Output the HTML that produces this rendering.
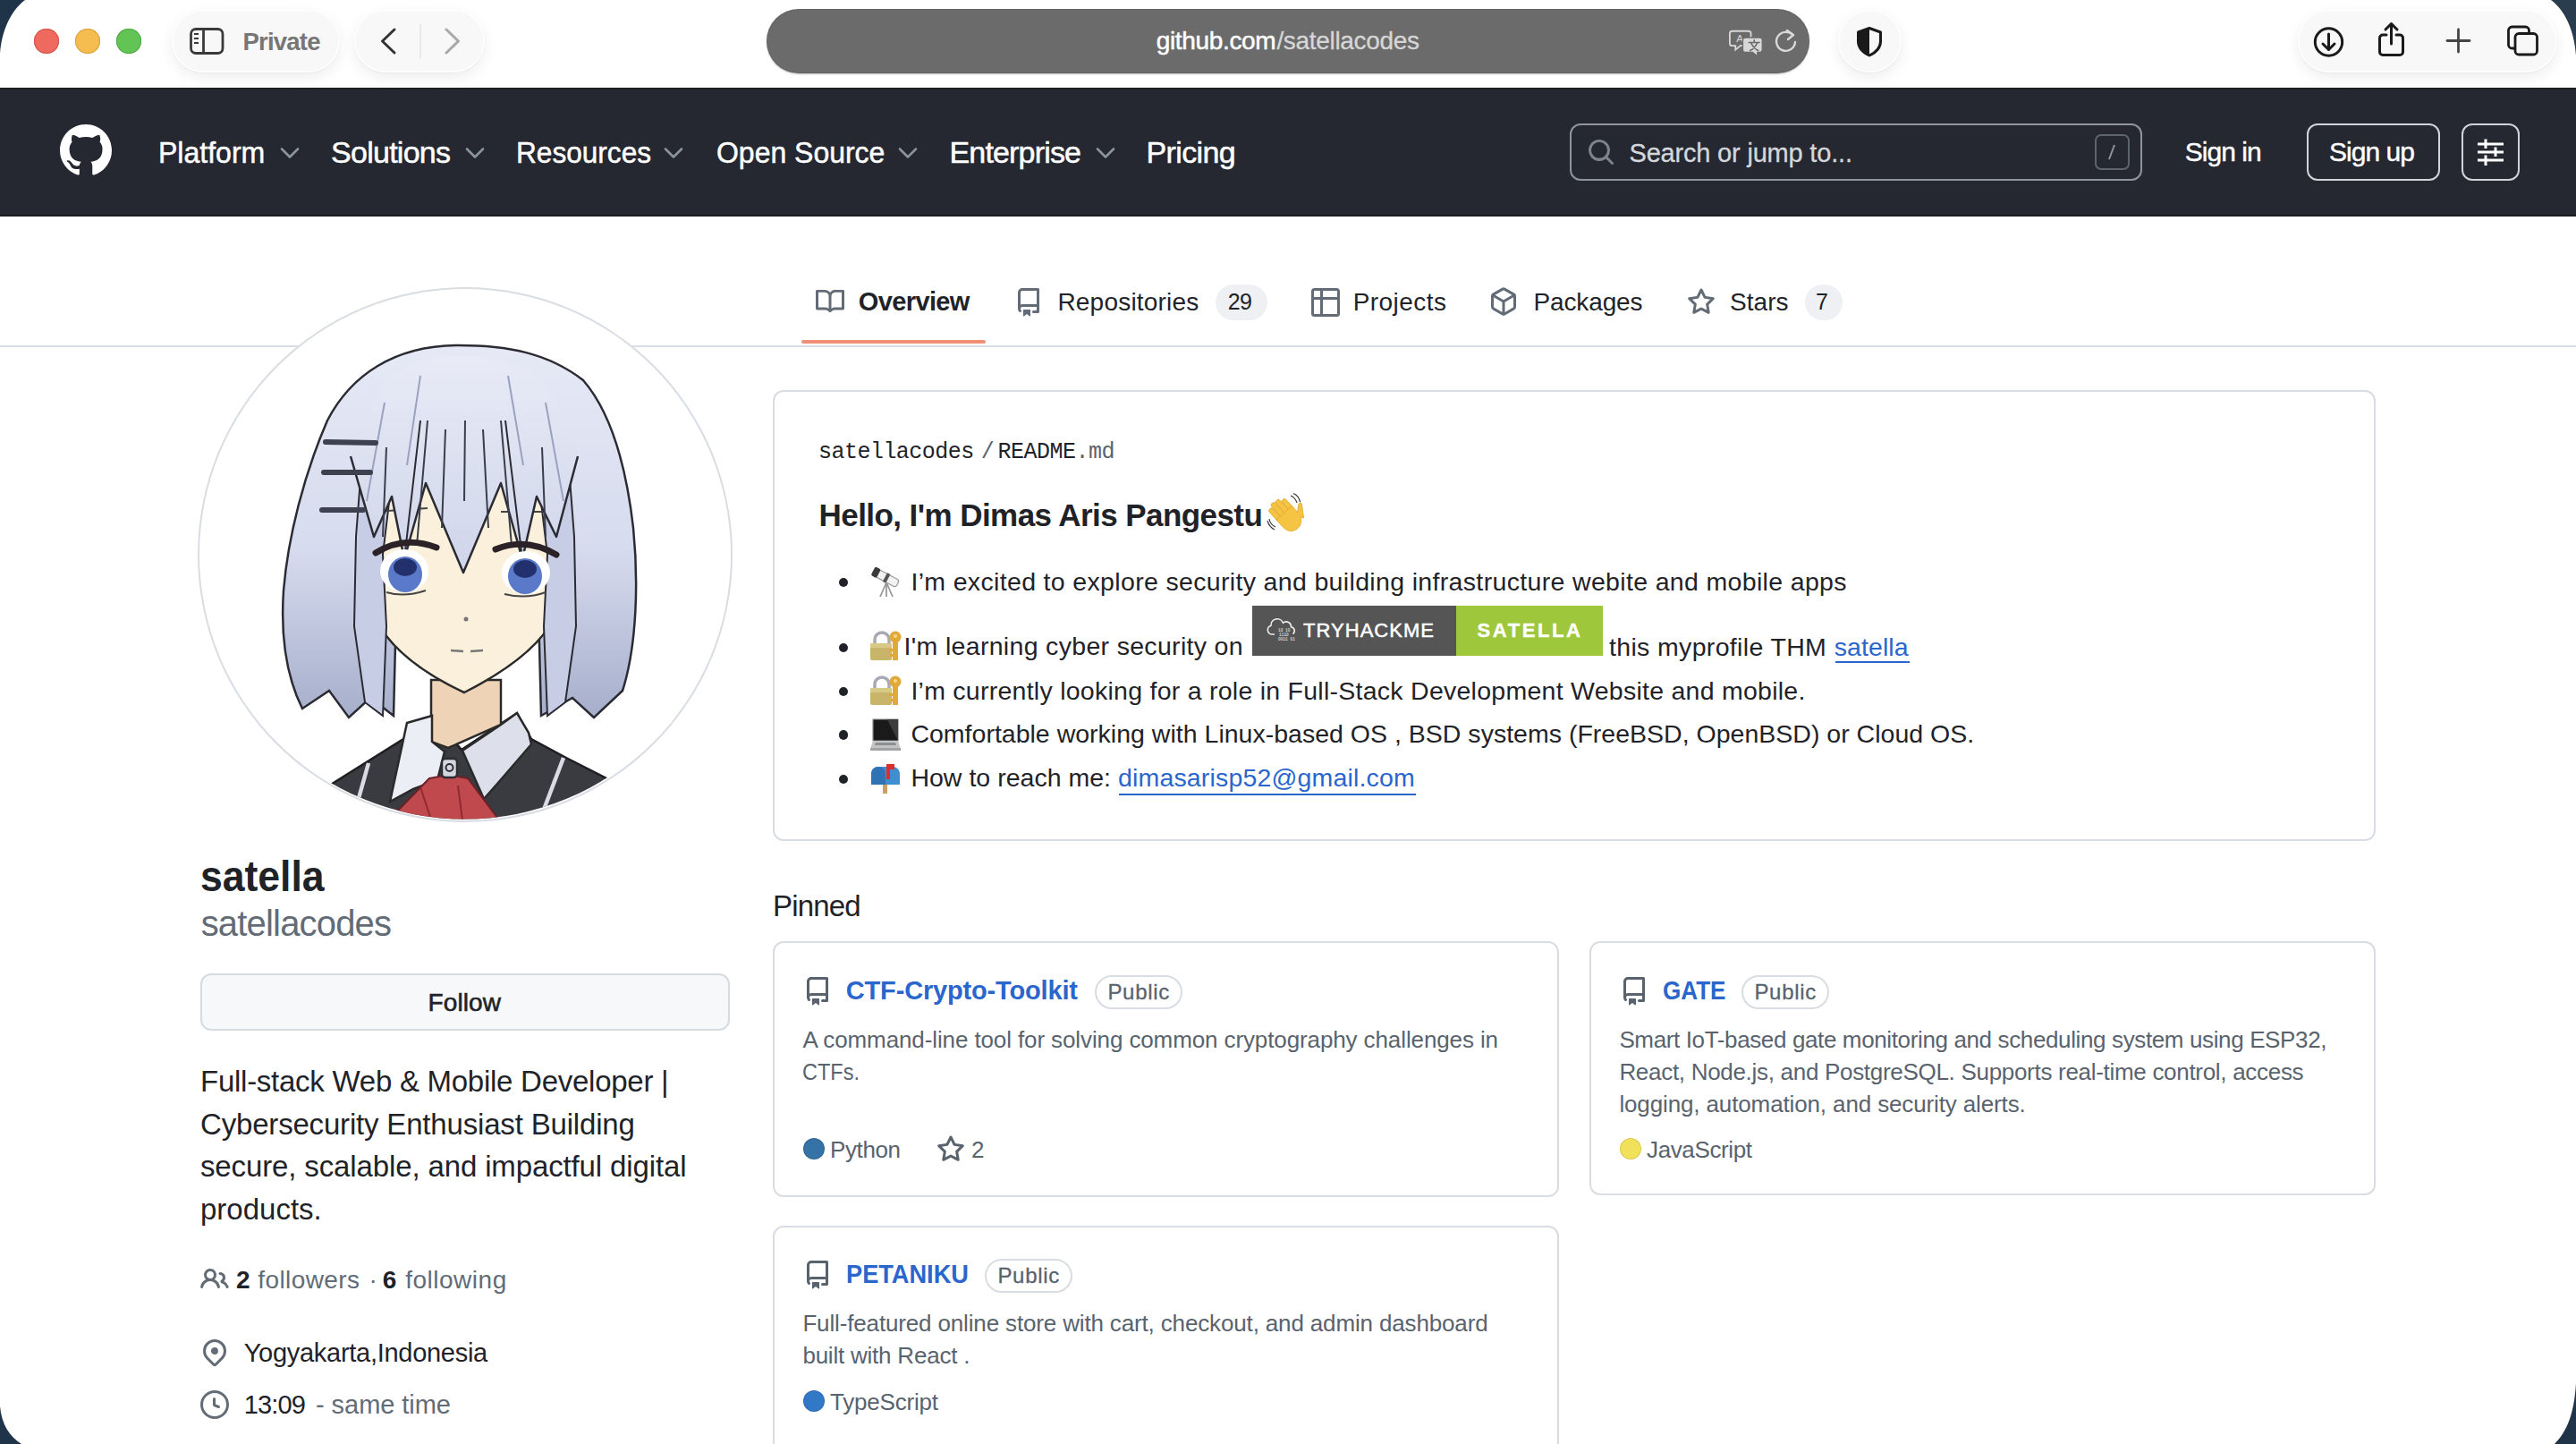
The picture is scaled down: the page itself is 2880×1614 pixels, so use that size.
<!DOCTYPE html>
<html><head><meta charset="utf-8"><title>satellacodes</title>
<style>
html,body{margin:0;padding:0;width:2880px;height:1614px;overflow:hidden;background:#22364d;}
.win{position:absolute;left:0;top:0;width:2880px;height:1614px;background:#ffffff;overflow:hidden;}
.t{position:absolute;white-space:nowrap;line-height:1;}
svg{overflow:visible}
</style></head><body>
<div class="win">
<div style="position:absolute;left:0;top:0;width:2880px;height:98px;background:#ffffff"></div>
<div style="position:absolute;left:38px;top:32px;width:28px;height:28px;border-radius:50%;background:#ee6a5f;box-shadow:inset 0 0 0 1px #d0534a"></div>
<div style="position:absolute;left:84px;top:32px;width:28px;height:28px;border-radius:50%;background:#f5bd4f;box-shadow:inset 0 0 0 1px #d9a23c"></div>
<div style="position:absolute;left:130px;top:32px;width:28px;height:28px;border-radius:50%;background:#61c455;box-shadow:inset 0 0 0 1px #4ea843"></div>
<div style="position:absolute;left:192px;top:11px;width:188px;height:70px;border-radius:35.0px;background:#f8f8f8;box-shadow:0 6px 16px rgba(0,0,0,0.07),0 1px 2px rgba(0,0,0,0.04),inset 0 0 0 1.5px rgba(255,255,255,0.9)"></div>
<div style="position:absolute;left:396px;top:11px;width:146px;height:70px;border-radius:35.0px;background:#f8f8f8;box-shadow:0 6px 16px rgba(0,0,0,0.07),0 1px 2px rgba(0,0,0,0.04),inset 0 0 0 1.5px rgba(255,255,255,0.9)"></div>
<div style="position:absolute;left:2055px;top:11px;width:71px;height:70px;border-radius:35.0px;background:#f8f8f8;box-shadow:0 6px 16px rgba(0,0,0,0.07),0 1px 2px rgba(0,0,0,0.04),inset 0 0 0 1.5px rgba(255,255,255,0.9)"></div>
<div style="position:absolute;left:2569px;top:11px;width:290px;height:70px;border-radius:35.0px;background:#f8f8f8;box-shadow:0 6px 16px rgba(0,0,0,0.07),0 1px 2px rgba(0,0,0,0.04),inset 0 0 0 1.5px rgba(255,255,255,0.9)"></div>
<svg style="position:absolute;left:208px;top:27px" width="46" height="38" viewBox="0 0 46 38">
<rect x="5.5" y="5.5" width="35.5" height="27" rx="5.5" fill="none" stroke="#3a3a3a" stroke-width="2.8"/>
<line x1="19.5" y1="5.5" x2="19.5" y2="32.5" stroke="#3a3a3a" stroke-width="2.8"/>
<line x1="9" y1="11" x2="14" y2="11" stroke="#3a3a3a" stroke-width="2"/>
<line x1="9" y1="16" x2="14" y2="16" stroke="#3a3a3a" stroke-width="2"/>
<line x1="9" y1="21" x2="14" y2="21" stroke="#3a3a3a" stroke-width="2"/>
</svg>
<div class="t" style="left:271.5px;top:32.7px;font-size:27.5px;font-family:'Liberation Sans', sans-serif;font-weight:700;color:#767676;letter-spacing:-0.79px;">Private</div>
<svg style="position:absolute;left:420px;top:28px" width="30" height="36" viewBox="0 0 30 36"><polyline points="21,5 7.5,18 21,31" fill="none" stroke="#333" stroke-width="3" stroke-linecap="round" stroke-linejoin="round"/></svg>
<div style="position:absolute;left:469px;top:27px;width:2px;height:38px;background:#e8e8e8"></div>
<svg style="position:absolute;left:490px;top:28px" width="30" height="36" viewBox="0 0 30 36"><polyline points="9,5 22.5,18 9,31" fill="none" stroke="#a9a9a9" stroke-width="3" stroke-linecap="round" stroke-linejoin="round"/></svg>
<div style="position:absolute;left:857px;top:10px;width:1166px;height:72px;border-radius:36px;background:#6b6b6b;box-shadow:0 1px 2px rgba(0,0,0,0.25), inset 0 0 0 1px rgba(0,0,0,0.08)"></div>
<div class="t" style="left:1292.7px;top:31.7px;font-size:28px;font-family:'Liberation Sans', sans-serif;font-weight:400;color:#ffffff;letter-spacing:-0.33px;-webkit-text-stroke:0.5px #fff;">github.com</div>
<div class="t" style="left:1427.4px;top:31.7px;font-size:28px;font-family:'Liberation Sans', sans-serif;font-weight:400;color:#d6d6d6;letter-spacing:-0.32px;-webkit-text-stroke:0.3px #d6d6d6;">/satellacodes</div>
<svg style="position:absolute;left:1933px;top:31px" width="40" height="33" viewBox="0 0 44 36">
<path d="M4 4 h20 a3 3 0 0 1 3 3 v12 a3 3 0 0 1 -3 3 h-10 l-6 5 v-5 h-4 a3 3 0 0 1 -3 -3 v-12 a3 3 0 0 1 3 -3z" fill="none" stroke="#d8d8d8" stroke-width="2"/>
<text x="9" y="18" font-family="Liberation Sans" font-size="13" fill="#d8d8d8">A</text>
<path d="M20 12 h18 a3 3 0 0 1 3 3 v12 a3 3 0 0 1 -3 3 h-3 v5 l-6 -5 h-9 a3 3 0 0 1 -3 -3 v-12 a3 3 0 0 1 3 -3z" fill="#d8d8d8" stroke="#6b6b6b" stroke-width="1.5"/>
<path d="M31 15 V17 M24.5 18 H37.5 M27 18 Q30 25 36 28 M35 18 Q32 25 26 28" stroke="#6b6b6b" stroke-width="1.8" fill="none" stroke-linecap="round"/>
</svg>
<svg style="position:absolute;left:1982px;top:28px" width="30" height="36" viewBox="0 0 30 36">
<path d="M22.5 11.5 A10.5 10.5 0 1 0 25 19" fill="none" stroke="#d8d8d8" stroke-width="2.4" stroke-linecap="round"/>
<polyline points="16,6 23,11 17,16" fill="none" stroke="#d8d8d8" stroke-width="2.4" stroke-linecap="round" stroke-linejoin="round"/>
</svg>
<svg style="position:absolute;left:2072px;top:28px" width="36" height="40" viewBox="0 0 36 40">
<path d="M18 3.5 L30.5 8 V18 C30.5 25 25.5 30.5 18 34 C10.5 30.5 5.5 25 5.5 18 V8 Z" fill="none" stroke="#1a1a1a" stroke-width="3" stroke-linejoin="round"/>
<path d="M18 3.5 L5.5 8 V18 C5.5 25 10.5 30.5 18 34 Z" fill="#1a1a1a"/>
</svg>
<svg style="position:absolute;left:2583px;top:26px" width="42" height="42" viewBox="0 0 42 42">
<circle cx="20.5" cy="21" r="15.2" fill="none" stroke="#1a1a1a" stroke-width="3"/>
<line x1="20.5" y1="12" x2="20.5" y2="29" stroke="#1a1a1a" stroke-width="3" stroke-linecap="round"/>
<polyline points="14,23 20.5,29.5 27,23" fill="none" stroke="#1a1a1a" stroke-width="3" stroke-linecap="round" stroke-linejoin="round"/>
</svg>
<svg style="position:absolute;left:2655px;top:22px" width="40" height="44" viewBox="0 0 40 44">
<path d="M13 17 H9 a3.5 3.5 0 0 0 -3.5 3.5 V36 a3.5 3.5 0 0 0 3.5 3.5 H28 a3.5 3.5 0 0 0 3.5 -3.5 V20.5 a3.5 3.5 0 0 0 -3.5 -3.5 H24" fill="none" stroke="#1a1a1a" stroke-width="3" stroke-linecap="round"/>
<line x1="18.5" y1="5" x2="18.5" y2="27" stroke="#1a1a1a" stroke-width="3" stroke-linecap="round"/>
<polyline points="12,11 18.5,4.5 25,11" fill="none" stroke="#1a1a1a" stroke-width="3" stroke-linecap="round" stroke-linejoin="round"/>
</svg>
<svg style="position:absolute;left:2730px;top:27px" width="38" height="38" viewBox="0 0 38 38">
<line x1="18.5" y1="6" x2="18.5" y2="31" stroke="#444" stroke-width="2.8" stroke-linecap="round"/>
<line x1="6" y1="18.5" x2="31" y2="18.5" stroke="#444" stroke-width="2.8" stroke-linecap="round"/>
</svg>
<svg style="position:absolute;left:2800px;top:26px" width="44" height="40" viewBox="0 0 44 40">
<path d="M11 28 H8.5 a4 4 0 0 1 -4 -4 V8 a4 4 0 0 1 4 -4 H23.5 a4 4 0 0 1 4 4 V11" fill="none" stroke="#1a1a1a" stroke-width="2.8"/>
<rect x="12" y="11.5" width="24.5" height="23.5" rx="4" fill="none" stroke="#1a1a1a" stroke-width="2.8"/>
</svg>
<div style="position:absolute;left:0;top:98px;width:2880px;height:144px;background:#252831;box-shadow:inset 0 2px 0 #1d1f23, inset 0 -2px 0 #1d1f23"></div>
<svg style="position:absolute;left:67px;top:138.5px;" width="58" height="58" viewBox="0 0 16 16" preserveAspectRatio="none"><path d="M8 0c4.42 0 8 3.58 8 8a8.013 8.013 0 0 1-5.45 7.59c-.4.08-.55-.17-.55-.38 0-.27.01-1.13.01-2.2 0-.75-.25-1.23-.54-1.48 1.78-.2 3.650-.88 3.65-3.95 0-.88-.31-1.59-.82-2.15.08-.2.36-1.02-.08-2.12 0 0-.67-.22-2.2.82-.64-.18-1.32-.27-2-.27-.68 0-1.36.09-2 .27-1.53-1.03-2.2-.82-2.2-.82-.44 1.1-.16 1.92-.08 2.12-.51.56-.82 1.28-.82 2.15 0 3.06 1.86 3.75 3.640 3.95-.23.2-.44.55-.51 1.07-.46.21-1.61.55-2.33-.66-.15-.24-.6-.83-1.23-.82-.67.01-.27.38.01.53.34.19.73.9.82 1.13.16.45.68 1.31 2.69.94 0 .67.01 1.3.01 1.49 0 .21-.15.45-.55.38A7.995 7.995 0 0 1 0 8c0-4.420 3.58-8 8-8Z" fill="#ffffff"/></svg>
<div class="t" style="left:177.2px;top:153.1px;font-size:34px;font-family:'Liberation Sans', sans-serif;font-weight:400;color:#ffffff;letter-spacing:0.00px;transform:scaleX(0.9425);transform-origin:0 0;-webkit-text-stroke:0.5px #fff;">Platform</div>
<svg style="position:absolute;left:312.5px;top:164px" width="22" height="15" viewBox="0 0 22 15"><polyline points="2,2.5 11,11.5 20,2.5" fill="none" stroke="#8b949e" stroke-width="2.6" stroke-linecap="round" stroke-linejoin="round"/></svg>
<div class="t" style="left:370.0px;top:153.1px;font-size:34px;font-family:'Liberation Sans', sans-serif;font-weight:400;color:#ffffff;letter-spacing:-0.73px;-webkit-text-stroke:0.5px #fff;">Solutions</div>
<svg style="position:absolute;left:519.5px;top:164px" width="22" height="15" viewBox="0 0 22 15"><polyline points="2,2.5 11,11.5 20,2.5" fill="none" stroke="#8b949e" stroke-width="2.6" stroke-linecap="round" stroke-linejoin="round"/></svg>
<div class="t" style="left:577.0px;top:153.1px;font-size:34px;font-family:'Liberation Sans', sans-serif;font-weight:400;color:#ffffff;letter-spacing:0.00px;transform:scaleX(0.9291);transform-origin:0 0;-webkit-text-stroke:0.5px #fff;">Resources</div>
<svg style="position:absolute;left:742.0px;top:164px" width="22" height="15" viewBox="0 0 22 15"><polyline points="2,2.5 11,11.5 20,2.5" fill="none" stroke="#8b949e" stroke-width="2.6" stroke-linecap="round" stroke-linejoin="round"/></svg>
<div class="t" style="left:800.6px;top:153.1px;font-size:34px;font-family:'Liberation Sans', sans-serif;font-weight:400;color:#ffffff;letter-spacing:0.00px;transform:scaleX(0.9403);transform-origin:0 0;-webkit-text-stroke:0.5px #fff;">Open Source</div>
<svg style="position:absolute;left:1003.5px;top:164px" width="22" height="15" viewBox="0 0 22 15"><polyline points="2,2.5 11,11.5 20,2.5" fill="none" stroke="#8b949e" stroke-width="2.6" stroke-linecap="round" stroke-linejoin="round"/></svg>
<div class="t" style="left:1061.5px;top:153.1px;font-size:34px;font-family:'Liberation Sans', sans-serif;font-weight:400;color:#ffffff;letter-spacing:-0.83px;-webkit-text-stroke:0.5px #fff;">Enterprise</div>
<svg style="position:absolute;left:1224.5px;top:164px" width="22" height="15" viewBox="0 0 22 15"><polyline points="2,2.5 11,11.5 20,2.5" fill="none" stroke="#8b949e" stroke-width="2.6" stroke-linecap="round" stroke-linejoin="round"/></svg>
<div class="t" style="left:1281.6px;top:153.1px;font-size:34px;font-family:'Liberation Sans', sans-serif;font-weight:400;color:#ffffff;letter-spacing:-0.66px;-webkit-text-stroke:0.5px #fff;">Pricing</div>
<div style="position:absolute;left:1755px;top:138px;width:640px;height:64px;box-sizing:border-box;border:2px solid #8f959c;border-radius:12px"></div>
<svg style="position:absolute;left:1774px;top:153.5px;" width="32" height="32" viewBox="0 0 16 16" preserveAspectRatio="none"><path d="M10.68 11.74a6 6 0 0 1-7.922-8.982 6 6 0 0 1 8.982 7.922l3.04 3.04a.749.749 0 0 1-.326 1.275.749.749 0 0 1-.734-.215ZM11.5 7a4.499 4.499 0 1 0-8.997 0A4.499 4.499 0 0 0 11.5 7Z" fill="#7d848c"/></svg>
<div class="t" style="left:1821.5px;top:157.0px;font-size:29px;font-family:'Liberation Sans', sans-serif;font-weight:400;color:#d4d7db;letter-spacing:-0.19px;-webkit-text-stroke:0.3px #d4d7db;">Search or jump to...</div>
<div style="position:absolute;left:2341.5px;top:150px;width:39px;height:40px;box-sizing:border-box;border:2px solid #5d646c;border-radius:7px"></div>
<svg style="position:absolute;left:2350px;top:158px" width="22" height="24" viewBox="0 0 22 24"><line x1="14" y1="4" x2="8" y2="20" stroke="#8f959c" stroke-width="2"/></svg>
<div class="t" style="left:2442.8px;top:154.8px;font-size:30px;font-family:'Liberation Sans', sans-serif;font-weight:400;color:#ffffff;letter-spacing:-0.97px;-webkit-text-stroke:0.4px #fff;">Sign in</div>
<div style="position:absolute;left:2579px;top:138px;width:149px;height:64px;box-sizing:border-box;border:2px solid #d0d4d9;border-radius:12px"></div>
<div class="t" style="left:2604.0px;top:154.8px;font-size:30px;font-family:'Liberation Sans', sans-serif;font-weight:400;color:#ffffff;letter-spacing:-0.96px;-webkit-text-stroke:0.4px #fff;">Sign up</div>
<div style="position:absolute;left:2751.5px;top:138px;width:65px;height:64px;box-sizing:border-box;border:2px solid #d0d4d9;border-radius:12px"></div>
<svg style="position:absolute;left:2766px;top:152px" width="36" height="36" viewBox="0 0 36 36">
<g stroke="#fff" stroke-width="3" stroke-linecap="butt">
<line x1="4" y1="9" x2="33" y2="9"/><line x1="13" y1="3.5" x2="13" y2="14"/>
<line x1="4" y1="18" x2="33" y2="18"/><line x1="24" y1="12.5" x2="24" y2="23"/>
<line x1="4" y1="27" x2="33" y2="27"/><line x1="13" y1="21.5" x2="13" y2="33"/>
</g></svg>
<div style="position:absolute;left:0;top:386px;width:2880px;height:2px;background:#d8dee4"></div>
<div style="position:absolute;left:895.5px;top:379.5px;width:206.5px;height:4.5px;background:#f08e78;border-radius:3px"></div>
<svg style="position:absolute;left:912px;top:322px;" width="32" height="30" viewBox="0 0 16 16" preserveAspectRatio="none"><path d="M0 1.75A.75.75 0 0 1 .75 1h4.253c1.227 0 2.317.59 3 1.501A3.743 3.743 0 0 1 11.006 1h4.245a.75.75 0 0 1 .75.75v10.5a.75.75 0 0 1-.75.75h-4.507a2.25 2.25 0 0 0-1.591.659l-.622.621a.75.75 0 0 1-1.06 0l-.622-.621A2.25 2.25 0 0 0 5.258 13H.75a.75.75 0 0 1-.75-.75Zm7.251 10.324.004-5.073-.002-2.253A2.25 2.25 0 0 0 5.003 2.5H1.5v9h3.757a3.75 3.75 0 0 1 1.994.574ZM8.755 4.750l-.004 7.322a3.752 3.752 0 0 1 1.992-.572H14.5v-9h-3.495a2.25 2.25 0 0 0-2.250 2.25Z" fill="#636c76"/></svg>
<div class="t" style="left:959.8px;top:322.6px;font-size:29px;font-family:'Liberation Sans', sans-serif;font-weight:700;color:#1f2328;letter-spacing:-0.62px;">Overview</div>
<svg style="position:absolute;left:1134px;top:322px;" width="32" height="32" viewBox="0 0 16 16" preserveAspectRatio="none"><path d="M2 2.5A2.5 2.5 0 0 1 4.5 0h8.75a.75.75 0 0 1 .75.75v12.5a.75.75 0 0 1-.75.75h-2.5a.75.75 0 0 1 0-1.5h1.75v-2h-8a1 1 0 0 0-.714 1.7.75.75 0 1 1-1.072 1.05A2.495 2.495 0 0 1 2 11.5Zm10.5-1h-8a1 1 0 0 0-1 1v6.708A2.486 2.486 0 0 1 4.5 9h8ZM5 12.25a.25.25 0 0 1 .25-.25h3.5a.25.25 0 0 1 .25.25v3.25a.25.25 0 0 1-.4.2l-1.45-1.087a.249.249 0 0 0-.3 0L5.4 15.7a.25.25 0 0 1-.4-.2Z" fill="#636c76"/></svg>
<div class="t" style="left:1182.4px;top:323.9px;font-size:28px;font-family:'Liberation Sans', sans-serif;font-weight:400;color:#1f2328;letter-spacing:0.21px;">Repositories</div>
<div style="position:absolute;left:1359px;top:318px;width:58px;height:40px;border-radius:20px;background:#eef0f3"></div>
<div class="t" style="left:1372.8px;top:325.3px;font-size:25px;font-family:'Liberation Sans', sans-serif;font-weight:400;color:#1f2328;letter-spacing:-0.60px;">29</div>
<svg style="position:absolute;left:1466px;top:322px;" width="32" height="32" viewBox="0 0 16 16" preserveAspectRatio="none"><path d="M0 1.75C0 .784.784 0 1.75 0h12.5C15.216 0 16 .784 16 1.75v12.5A1.75 1.75 0 0 1 14.25 16H1.75A1.75 1.75 0 0 1 0 14.25ZM6.5 6.5v8h7.75a.25.25 0 0 0 .25-.25V6.5Zm8-1.5V1.75a.25.25 0 0 0-.25-.25H6.5V5Zm-13 1.5v7.75c0 .138.112.25.25.25H5v-8ZM5 5V1.5H1.75a.25.25 0 0 0-.25.25V5Z" fill="#636c76"/></svg>
<div class="t" style="left:1512.7px;top:323.9px;font-size:28px;font-family:'Liberation Sans', sans-serif;font-weight:400;color:#1f2328;letter-spacing:0.45px;">Projects</div>
<svg style="position:absolute;left:1665px;top:321px;" width="32" height="32" viewBox="0 0 16 16" preserveAspectRatio="none"><path d="m8.878.392 5.25 3.045c.54.314.872.89.872 1.514v6.098a1.75 1.75 0 0 1-.872 1.514l-5.25 3.045a1.75 1.75 0 0 1-1.756 0l-5.25-3.045A1.75 1.75 0 0 1 1 11.049V4.951c0-.624.332-1.201.872-1.514L7.122.392a1.75 1.75 0 0 1 1.756 0ZM7.875 1.690l-4.63 2.685L8 7.133l4.755-2.758-4.63-2.685a.248.248 0 0 0-.25 0ZM2.5 5.677v5.372c0 .09.047.171.125.216l4.625 2.683V8.432Zm6.25 8.271 4.625-2.683a.25.25 0 0 0 .125-.216V5.677L8.75 8.432Z" fill="#636c76"/></svg>
<div class="t" style="left:1714.5px;top:323.9px;font-size:28px;font-family:'Liberation Sans', sans-serif;font-weight:400;color:#1f2328;letter-spacing:-0.13px;">Packages</div>
<svg style="position:absolute;left:1886px;top:322px;" width="32" height="32" viewBox="0 0 16 16" preserveAspectRatio="none"><path d="M8 .25a.75.75 0 0 1 .673.418l1.882 3.815 4.21.612a.75.75 0 0 1 .416 1.279l-3.046 2.97.719 4.192a.751.751 0 0 1-1.088.791L8 12.347l-3.766 1.98a.75.75 0 0 1-1.088-.79l.72-4.194L.818 6.374a.75.75 0 0 1 .416-1.28l4.21-.611L7.327.668A.75.75 0 0 1 8 .25Zm0 2.445L6.615 5.5a.75.75 0 0 1-.564.41l-3.097.45 2.24 2.184a.75.75 0 0 1 .216.664l-.528 3.084 2.769-1.456a.75.75 0 0 1 .698 0l2.770 1.456-.53-3.084a.75.75 0 0 1 .216-.664l2.24-2.183-3.096-.45a.75.75 0 0 1-.564-.41L8 2.694Z" fill="#636c76"/></svg>
<div class="t" style="left:1934.0px;top:323.9px;font-size:28px;font-family:'Liberation Sans', sans-serif;font-weight:400;color:#1f2328;letter-spacing:0.06px;">Stars</div>
<div style="position:absolute;left:2018px;top:318px;width:42px;height:40px;border-radius:20px;background:#eef0f3"></div>
<div class="t" style="left:2030.0px;top:325.3px;font-size:25px;font-family:'Liberation Sans', sans-serif;font-weight:400;color:#1f2328;letter-spacing:0.00px;">7</div>
<div style="position:absolute;left:222.60000000000002px;top:322.6px;width:594px;height:594px;border-radius:50%;background:#fff;box-shadow:0 0 0 2px #d8dde3"></div>
<svg style="position:absolute;left:0;top:0" width="900" height="1000" viewBox="0 0 900 1000">
<defs><clipPath id="avc"><circle cx="519.6" cy="619.6" r="296"/></clipPath>
<linearGradient id="hairg" x1="0" y1="0" x2="0" y2="1"><stop offset="0" stop-color="#e6e9f5"/><stop offset="0.55" stop-color="#d6dbee"/><stop offset="1" stop-color="#a6aecb"/></linearGradient>
<linearGradient id="bangg" x1="0" y1="0" x2="0" y2="1"><stop offset="0" stop-color="#e8ebf6"/><stop offset="1" stop-color="#cfd5ea"/></linearGradient></defs>
<g clip-path="url(#avc)">
<path d="M300 940 L365 880 L451 826 L483 800 L516 838 L578 797 L594 826 L633 847 L682 872 L740 940 Z" fill="#3a3b41" stroke="#1e1e22" stroke-width="2.5"/>
<path d="M412 853 L396 910" stroke="#d9dce3" stroke-width="4.5" fill="none"/>
<path d="M630 847 L606 910" stroke="#d9dce3" stroke-width="4.5" fill="none"/>
<path d="M482 760 L482 829 L501 836 L560 810 L560 760 Z" fill="#efd3b6" stroke="#2a2a2a" stroke-width="2.5"/>
<path d="M455 808 L483 800 L483 829 L497 840 L489 872 L462 882 L436 896 Z" fill="#eceef6" stroke="#2a2a2a" stroke-width="2.5"/>
<path d="M560 810 L578 797 L591 819 L594 832 L556 876 L541 893 L517 839 Z" fill="#dde0eb" stroke="#2a2a2a" stroke-width="2.5"/>
<path d="M480 870 L502 866 L523 870 L556 914 L548 940 L432 940 L437 914 Z" fill="#c0494d" stroke="#6a2226" stroke-width="2"/>
<path d="M470 880 L490 940 M512 878 L520 940" stroke="#8f2a2f" stroke-width="2" fill="none"/>
<rect x="494" y="848" width="17" height="21" rx="4" fill="#d4d7e0" stroke="#2d2d33" stroke-width="2.5"/>
<circle cx="502.5" cy="858" r="4" fill="none" stroke="#2d2d33" stroke-width="2"/>
<path d="M513 386 C440 386 392 420 366 470 C340 530 322 600 317 660 C313 720 322 760 338 792 L368 772 L390 802 L414 780 L440 800 L445 600 L600 600 L605 800 L640 780 L664 802 L696 772 C712 722 714 650 708 590 C700 520 684 462 652 425 C612 394 566 386 513 386 Z" fill="url(#hairg)" stroke="#2b2b33" stroke-width="2.5"/>
<path d="M416 530 L419 690 Q442 738 519 774 Q598 734 620 690 L624 530 Z" fill="#fbf0dc" stroke="#2b2b2b" stroke-width="2.5"/>
<path d="M408 470 L398 600 L396 700 L408 785 L428 800 L432 700 L428 620 L440 520 Z" fill="#c6cde4" stroke="#2b2b33" stroke-width="2"/>
<path d="M632 470 L642 600 L644 700 L632 785 L612 800 L608 700 L612 620 L600 520 Z" fill="#c6cde4" stroke="#2b2b33" stroke-width="2"/>
<path d="M418 572 L478 568 M560 572 L620 572" stroke="#444" stroke-width="2" fill="none"/>
<path d="M513 398 C452 398 408 428 392 510 L418 600 L438 555 L452 625 L476 540 L518 640 L560 540 L584 625 L600 555 L622 600 L646 510 C632 428 578 398 513 398 Z" fill="url(#bangg)"/>
<polyline points="392,510 418,600 438,555 452,625 476,540 518,640 560,540 584,625 600,555 622,600 646,510" fill="none" stroke="#2b2b33" stroke-width="2.5" stroke-linejoin="round"/>
<path d="M478 470 L466 610 M520 470 L519 560 M560 470 L572 610 M432 500 L428 600 M606 500 L610 600 M498 480 L494 590 M540 480 L546 590" stroke="#3a3d4a" stroke-width="2" fill="none"/><path d="M470 420 L455 520 M568 420 L585 520 M430 450 L410 560 M610 450 L630 560" stroke="#9aa2c0" stroke-width="2" fill="none"/>
<path d="M470 470 L452 625 M565 470 L584 625" stroke="#2b2b33" stroke-width="2" fill="none"/>
<g stroke="#3d4150" stroke-width="6" stroke-linecap="round"><line x1="364" y1="494" x2="420" y2="495"/><line x1="362" y1="528" x2="414" y2="528"/><line x1="360" y1="570" x2="406" y2="570"/></g>
<ellipse cx="452" cy="638" rx="27" ry="24" fill="#ffffff"/>
<ellipse cx="453" cy="642" rx="19" ry="20" fill="#5a7ac9"/>
<ellipse cx="453" cy="634" rx="13" ry="10" fill="#23306e"/>
<path d="M420 618 Q452 598 488 612" stroke="#2a2226" stroke-width="7" fill="none" stroke-linecap="round"/>
<path d="M432 662 Q452 668 476 660" stroke="#444" stroke-width="2" fill="none"/>
<ellipse cx="588" cy="640" rx="27" ry="24" fill="#ffffff"/>
<ellipse cx="587" cy="644" rx="19" ry="20" fill="#5a7ac9"/>
<ellipse cx="587" cy="636" rx="13" ry="10" fill="#23306e"/>
<path d="M554 614 Q588 600 622 620" stroke="#2a2226" stroke-width="7" fill="none" stroke-linecap="round"/>
<path d="M564 664 Q588 670 610 662" stroke="#444" stroke-width="2" fill="none"/>
<circle cx="521" cy="692" r="2.5" fill="#777"/>
<path d="M504 727 L518 728 M526 728 L540 727" stroke="#777" stroke-width="2.5"/>
</g></svg>
<div class="t" style="left:224.2px;top:955.5px;font-size:48px;font-family:'Liberation Sans', sans-serif;font-weight:700;color:#1f2328;letter-spacing:0.00px;transform:scaleX(0.9275);transform-origin:0 0;">satella</div>
<div class="t" style="left:224.7px;top:1011.6px;font-size:40px;font-family:'Liberation Sans', sans-serif;font-weight:400;color:#636c76;letter-spacing:-0.82px;">satellacodes</div>
<div style="position:absolute;left:224px;top:1088px;width:592px;height:63.5px;box-sizing:border-box;background:#f6f8fa;border:2px solid #d6dbe0;border-radius:12px"></div>
<div class="t" style="left:478.5px;top:1106.6px;font-size:28px;font-family:'Liberation Sans', sans-serif;font-weight:400;color:#1f2328;letter-spacing:0.10px;-webkit-text-stroke:0.6px #1f2328;">Follow</div>
<div class="t" style="left:224.0px;top:1191.6px;font-size:33px;font-family:'Liberation Sans', sans-serif;font-weight:400;color:#1f2328;letter-spacing:-0.26px;">Full-stack Web &amp; Mobile Developer |</div>
<div class="t" style="left:224.0px;top:1239.6px;font-size:33px;font-family:'Liberation Sans', sans-serif;font-weight:400;color:#1f2328;letter-spacing:-0.18px;">Cybersecurity Enthusiast Building</div>
<div class="t" style="left:224.0px;top:1287.3px;font-size:33px;font-family:'Liberation Sans', sans-serif;font-weight:400;color:#1f2328;letter-spacing:-0.13px;">secure, scalable, and impactful digital</div>
<div class="t" style="left:224.0px;top:1335.1px;font-size:33px;font-family:'Liberation Sans', sans-serif;font-weight:400;color:#1f2328;letter-spacing:0.00px;">products.</div>
<svg style="position:absolute;left:224px;top:1414px;" width="32" height="32" viewBox="0 0 16 16" preserveAspectRatio="none"><path d="M2 5.5a3.5 3.5 0 1 1 5.898 2.549 5.508 5.508 0 0 1 3.034 4.084.75.75 0 1 1-1.482.235 4 4 0 0 0-7.9 0 .75.75 0 0 1-1.482-.236A5.507 5.507 0 0 1 3.102 8.05 3.493 3.493 0 0 1 2 5.5ZM11 4a3.001 3.001 0 0 1 2.22 5.018 5.01 5.01 0 0 1 2.56 3.012.749.749 0 0 1-.885.954.752.752 0 0 1-.549-.514 3.507 3.507 0 0 0-2.522-2.372.75.75 0 0 1-.574-.73v-.352a.75.75 0 0 1 .416-.672A1.5 1.5 0 0 0 11 5.5.75.75 0 0 1 11 4Zm-5.5-.5a2 2 0 1 0-.001 3.999A2 2 0 0 0 5.500 3.5Z" fill="#636c76"/></svg>
<div class="t" style="left:264.0px;top:1416.6px;font-size:28px;font-family:'Liberation Sans', sans-serif;font-weight:700;color:#1f2328;letter-spacing:0.00px;">2</div>
<div class="t" style="left:288.3px;top:1416.6px;font-size:28px;font-family:'Liberation Sans', sans-serif;font-weight:400;color:#636c76;letter-spacing:0.40px;">followers</div>
<div class="t" style="left:412.4px;top:1416.6px;font-size:28px;font-family:'Liberation Sans', sans-serif;font-weight:400;color:#636c76;letter-spacing:0.00px;">·</div>
<div class="t" style="left:427.8px;top:1416.6px;font-size:28px;font-family:'Liberation Sans', sans-serif;font-weight:700;color:#1f2328;letter-spacing:0.00px;">6</div>
<div class="t" style="left:453.2px;top:1416.6px;font-size:28px;font-family:'Liberation Sans', sans-serif;font-weight:400;color:#636c76;letter-spacing:0.51px;">following</div>
<svg style="position:absolute;left:224px;top:1496px;" width="32" height="32" viewBox="0 0 16 16" preserveAspectRatio="none"><path d="m12.596 11.596-3.535 3.536a1.5 1.5 0 0 1-2.122 0l-3.535-3.536a6.5 6.5 0 1 1 9.192-9.193 6.5 6.5 0 0 1 0 9.193Zm-1.06-8.132v-.001a5 5 0 1 0-7.072 7.072L8 14.070l3.536-3.534a5 5 0 0 0 0-7.072ZM8 9a2 2 0 1 1-.001-3.999A2 2 0 0 1 8 9Z" fill="#636c76"/></svg>
<div class="t" style="left:272.7px;top:1497.7px;font-size:29px;font-family:'Liberation Sans', sans-serif;font-weight:400;color:#1f2328;letter-spacing:-0.28px;">Yogyakarta,Indonesia</div>
<svg style="position:absolute;left:224px;top:1554px;" width="32" height="32" viewBox="0 0 16 16" preserveAspectRatio="none"><path d="M8 0a8 8 0 1 1 0 16A8 8 0 0 1 8 0ZM1.5 8a6.5 6.5 0 1 0 13 0 6.5 6.5 0 0 0-13 0Zm7-3.25v2.992l2.028.812a.75.75 0 0 1-.557 1.392l-2.5-1A.751.751 0 0 1 7 8.25v-3.5a.75.75 0 0 1 1.5 0Z" fill="#636c76"/></svg>
<div class="t" style="left:272.7px;top:1555.7px;font-size:29px;font-family:'Liberation Sans', sans-serif;font-weight:400;color:#1f2328;letter-spacing:-0.84px;">13:09</div>
<div class="t" style="left:353.0px;top:1555.7px;font-size:29px;font-family:'Liberation Sans', sans-serif;font-weight:400;color:#636c76;letter-spacing:-0.05px;">- same time</div>
<div style="position:absolute;left:864px;top:436px;width:1792px;height:504px;box-sizing:border-box;border:2px solid #d8dde3;border-radius:12px"></div>
<div class="t" style="left:915.1px;top:492.5px;font-size:25px;font-family:'Liberation Mono', monospace;font-weight:400;color:#1f2328;letter-spacing:-0.54px;">satellacodes</div>
<div class="t" style="left:1096.7px;top:492.5px;font-size:25px;font-family:'Liberation Mono', monospace;font-weight:400;color:#59636e;letter-spacing:0.00px;">/</div>
<div class="t" style="left:1115.4px;top:492.5px;font-size:25px;font-family:'Liberation Mono', monospace;font-weight:400;color:#1f2328;letter-spacing:-0.48px;">README<span style="color:#59636e">.md</span></div>
<div class="t" style="left:915.6px;top:558.1px;font-size:35px;font-family:'Liberation Sans', sans-serif;font-weight:700;color:#1f2328;letter-spacing:-0.57px;">Hello, I'm Dimas Aris Pangestu</div>
<svg style="position:absolute;left:1416px;top:550px" width="48" height="48" viewBox="0 0 48 48">
<g transform="rotate(-42 24 26)" fill="#f6c443" stroke="#e0a52c" stroke-width="0.8">
<rect x="11" y="7" width="5.6" height="20" rx="2.8"/>
<rect x="17" y="4" width="5.6" height="22" rx="2.8"/>
<rect x="23" y="5" width="5.6" height="22" rx="2.8"/>
<rect x="29" y="9" width="5.2" height="18" rx="2.6"/>
<path d="M11 21 H34.2 V31 C34.2 39 29 44 22.5 44 C15 44 11 38.5 11 31 Z"/>
<path d="M31 33 L41 25 C43 23.5 45 25.5 43.5 27.5 L35 40 Z"/>
<path d="M11.3 22 H34 V31 C34 38 29 43.5 22.5 43.5 C15 43.5 11.3 38 11.3 31 Z" stroke="none"/>
</g>
<path d="M27 4 Q32 6 34 12 M30 1.5 Q36 4 37.5 11" stroke="#3a3a3a" stroke-width="1.2" fill="none"/>
<path d="M3 30 Q4 36 10 39 M1 32 Q3 39 9 42" stroke="#3a3a3a" stroke-width="1.2" fill="none"/>
</svg>
<div style="position:absolute;left:937.7px;top:645.7px;width:10.6px;height:10.6px;border-radius:50%;background:#1f2328"></div>
<div style="position:absolute;left:937.7px;top:718.7px;width:10.6px;height:10.6px;border-radius:50%;background:#1f2328"></div>
<div style="position:absolute;left:937.7px;top:767.7px;width:10.6px;height:10.6px;border-radius:50%;background:#1f2328"></div>
<div style="position:absolute;left:937.7px;top:816.2px;width:10.6px;height:10.6px;border-radius:50%;background:#1f2328"></div>
<div style="position:absolute;left:937.7px;top:865.7px;width:10.6px;height:10.6px;border-radius:50%;background:#1f2328"></div>
<svg style="position:absolute;left:972px;top:632px" width="36" height="36" viewBox="0 0 36 36">
<g transform="rotate(28 18 14)"><rect x="3" y="9" width="30" height="9" rx="3" fill="#f2f2f2" stroke="#9a9a9a" stroke-width="1.2"/><rect x="2" y="8" width="7" height="11" rx="2" fill="#3a3a3a"/><rect x="17" y="8" width="4" height="11" fill="#555"/></g>
<path d="M19 19 L12 35 M19 19 L19 35 M19 19 L26 35" stroke="#9a9a9a" stroke-width="1.8"/>
</svg>
<div class="t" style="left:1018.4px;top:635.7px;font-size:28.5px;font-family:'Liberation Sans', sans-serif;font-weight:400;color:#1f2328;letter-spacing:0.34px;">I’m excited to explore security and building infrastructure webite and mobile apps</div>
<svg style="position:absolute;left:972px;top:705px" width="36" height="34" viewBox="0 0 36 34">
<path d="M6 15 V10 a8 8 0 0 1 16 0 V15" fill="none" stroke="#a7a9b3" stroke-width="3.5"/>
<rect x="1" y="14" width="24" height="19" rx="2" fill="#c8b56a"/><rect x="1" y="14" width="24" height="5" fill="#d8c987"/>
<circle cx="29" cy="7" r="6.5" fill="#e0a93a"/><circle cx="29" cy="6" r="2" fill="#f5d58a"/>
<rect x="26" y="11" width="6" height="22" fill="#e0a93a"/><rect x="22.5" y="20" width="4" height="3" fill="#e0a93a"/><rect x="22.5" y="26" width="4" height="3" fill="#e0a93a"/>
</svg>
<div class="t" style="left:1010.6px;top:708.4px;font-size:28.5px;font-family:'Liberation Sans', sans-serif;font-weight:400;color:#1f2328;letter-spacing:0.32px;">I'm learning cyber security on</div>
<div style="position:absolute;left:1400px;top:677px;width:228px;height:56px;background:#555555"></div>
<div style="position:absolute;left:1628px;top:677px;width:164px;height:56px;background:#9fc73b"></div>
<svg style="position:absolute;left:1416px;top:689px" width="32" height="30" viewBox="0 0 32 30">
<path d="M9 20 H6 a5 5 0 0 1 -1 -9.8 a7 7 0 0 1 13.5 -3 a5.5 5.5 0 0 1 9 4.5 a4.5 4.5 0 0 1 2 8" fill="none" stroke="#eee" stroke-width="1.6"/>
<g fill="#eee" font-family="Liberation Mono" font-size="4.5"><text x="13" y="17">10 10</text><text x="14" y="22">1110</text><text x="13" y="27">0011 01</text></g>
</svg>
<div class="t" style="left:1457.1px;top:693.6px;font-size:22px;font-family:'Liberation Sans', sans-serif;font-weight:400;color:#ffffff;letter-spacing:1.02px;-webkit-text-stroke:0.5px #fff;">TRYHACKME</div>
<div class="t" style="left:1651.6px;top:693.6px;font-size:22px;font-family:'Liberation Sans', sans-serif;font-weight:700;color:#ffffff;letter-spacing:2.60px;-webkit-text-stroke:0.4px #fff;">SATELLA</div>
<div class="t" style="left:1799.0px;top:708.7px;font-size:28.5px;font-family:'Liberation Sans', sans-serif;font-weight:400;color:#1f2328;letter-spacing:0.34px;">this myprofile THM</div>
<div class="t" style="left:2050.8px;top:708.7px;font-size:28.5px;font-family:'Liberation Sans', sans-serif;font-weight:400;color:#2a66cc;letter-spacing:0.07px;">satella</div>
<div style="position:absolute;left:2051.5px;top:738.5px;width:83.5px;height:2px;background:#2a66cc"></div>
<svg style="position:absolute;left:972px;top:755px" width="36" height="34" viewBox="0 0 36 34">
<path d="M6 15 V10 a8 8 0 0 1 16 0 V15" fill="none" stroke="#a7a9b3" stroke-width="3.5"/>
<rect x="1" y="14" width="24" height="19" rx="2" fill="#c8b56a"/><rect x="1" y="14" width="24" height="5" fill="#d8c987"/>
<circle cx="29" cy="7" r="6.5" fill="#e0a93a"/><circle cx="29" cy="6" r="2" fill="#f5d58a"/>
<rect x="26" y="11" width="6" height="22" fill="#e0a93a"/><rect x="22.5" y="20" width="4" height="3" fill="#e0a93a"/><rect x="22.5" y="26" width="4" height="3" fill="#e0a93a"/>
</svg>
<div class="t" style="left:1018.4px;top:757.9px;font-size:28.5px;font-family:'Liberation Sans', sans-serif;font-weight:400;color:#1f2328;letter-spacing:0.26px;">I’m currently looking for a role in Full-Stack Development Website and mobile.</div>
<svg style="position:absolute;left:972px;top:803px" width="36" height="36" viewBox="0 0 36 36">
<path d="M4 1 H32 V25 H4 Z" fill="#1a1a1a" stroke="#8a8a8a" stroke-width="1.2"/>
<path d="M20 1 H32 V25 Z" fill="#3c3c3c"/>
<path d="M4 25 H32 L35 34 H1 Z" fill="#c3c4c6"/>
<path d="M7 27 H29 L30 30 H6 Z" fill="#8d8e90"/>
<rect x="1" y="33" width="34" height="3" fill="#a2a3a5"/>
</svg>
<div class="t" style="left:1018.4px;top:806.4px;font-size:28.5px;font-family:'Liberation Sans', sans-serif;font-weight:400;color:#1f2328;letter-spacing:0.01px;">Comfortable working with Linux-based OS , BSD systems (FreeBSD, OpenBSD) or Cloud OS.</div>
<svg style="position:absolute;left:972px;top:853px" width="36" height="34" viewBox="0 0 36 34">
<rect x="15" y="22" width="5" height="12" fill="#c8a062"/>
<path d="M2 12 a8 8 0 0 1 8 -8 H26 a8 8 0 0 1 8 8 V24 H2 Z" fill="#3f8fd0"/>
<path d="M2 12 a8 8 0 0 1 16 0 V24 H2 Z" fill="#2f73b5"/>
<rect x="19" y="1" width="4" height="17" fill="#d9302c"/><rect x="19" y="1" width="9" height="6" fill="#d9302c"/>
</svg>
<div class="t" style="left:1018.4px;top:855.4px;font-size:28.5px;font-family:'Liberation Sans', sans-serif;font-weight:400;color:#1f2328;letter-spacing:0.02px;">How to reach me:</div>
<div class="t" style="left:1250.0px;top:855.4px;font-size:28.5px;font-family:'Liberation Sans', sans-serif;font-weight:400;color:#2a66cc;letter-spacing:0.16px;">dimasarisp52@gmail.com</div>
<div style="position:absolute;left:1251px;top:886.5px;width:332px;height:2px;background:#2a66cc"></div>
<div class="t" style="left:864.0px;top:996.1px;font-size:33px;font-family:'Liberation Sans', sans-serif;font-weight:400;color:#1f2328;letter-spacing:-0.85px;">Pinned</div>
<div style="position:absolute;left:864px;top:1052px;width:879px;height:285.5px;box-sizing:border-box;border:2px solid #d8dde3;border-radius:12px;background:#fff"></div>
<svg style="position:absolute;left:898px;top:1092px;" width="32" height="32" viewBox="0 0 16 16" preserveAspectRatio="none"><path d="M2 2.5A2.5 2.5 0 0 1 4.5 0h8.75a.75.75 0 0 1 .75.75v12.5a.75.75 0 0 1-.75.75h-2.5a.75.75 0 0 1 0-1.5h1.75v-2h-8a1 1 0 0 0-.714 1.7.75.75 0 1 1-1.072 1.05A2.495 2.495 0 0 1 2 11.5Zm10.5-1h-8a1 1 0 0 0-1 1v6.708A2.486 2.486 0 0 1 4.5 9h8ZM5 12.25a.25.25 0 0 1 .25-.25h3.5a.25.25 0 0 1 .25.25v3.25a.25.25 0 0 1-.4.2l-1.45-1.087a.249.249 0 0 0-.3 0L5.4 15.7a.25.25 0 0 1-.4-.2Z" fill="#59636e"/></svg>
<div class="t" style="left:945.8px;top:1093.0px;font-size:29px;font-family:'Liberation Sans', sans-serif;font-weight:700;color:#2a66cc;letter-spacing:-0.17px;">CTF-Crypto-Toolkit</div>
<div style="position:absolute;left:1224px;top:1089.6px;width:98px;height:38.4px;box-sizing:border-box;border:2px solid #d8dde3;border-radius:20px"></div>
<div class="t" style="left:1238.4px;top:1097.3px;font-size:24px;font-family:'Liberation Sans', sans-serif;font-weight:400;color:#59636e;letter-spacing:0.72px;-webkit-text-stroke:0.3px #59636e;">Public</div>
<div class="t" style="left:897.4px;top:1149.0px;font-size:26px;font-family:'Liberation Sans', sans-serif;font-weight:400;color:#59636e;letter-spacing:-0.11px;">A command-line tool for solving common cryptography challenges in</div>
<div class="t" style="left:897.4px;top:1185.0px;font-size:26px;font-family:'Liberation Sans', sans-serif;font-weight:400;color:#59636e;letter-spacing:0.00px;transform:scaleX(0.9043);transform-origin:0 0;">CTFs.</div>
<div style="position:absolute;left:898px;top:1272px;width:24px;height:24px;border-radius:50%;background:#3572A5;box-sizing:border-box;border:1px solid rgba(0,0,0,0.1)"></div>
<div class="t" style="left:928.0px;top:1271.5px;font-size:26px;font-family:'Liberation Sans', sans-serif;font-weight:400;color:#59636e;letter-spacing:-0.39px;">Python</div>
<svg style="position:absolute;left:1047px;top:1269px;" width="32" height="32" viewBox="0 0 16 16" preserveAspectRatio="none"><path d="M8 .25a.75.75 0 0 1 .673.418l1.882 3.815 4.21.612a.75.75 0 0 1 .416 1.279l-3.046 2.97.719 4.192a.751.751 0 0 1-1.088.791L8 12.347l-3.766 1.98a.75.75 0 0 1-1.088-.79l.72-4.194L.818 6.374a.75.75 0 0 1 .416-1.28l4.21-.611L7.327.668A.75.75 0 0 1 8 .25Zm0 2.445L6.615 5.5a.75.75 0 0 1-.564.41l-3.097.45 2.24 2.184a.75.75 0 0 1 .216.664l-.528 3.084 2.769-1.456a.75.75 0 0 1 .698 0l2.770 1.456-.53-3.084a.75.75 0 0 1 .216-.664l2.24-2.183-3.096-.45a.75.75 0 0 1-.564-.41L8 2.694Z" fill="#59636e"/></svg>
<div class="t" style="left:1086.0px;top:1271.5px;font-size:26px;font-family:'Liberation Sans', sans-serif;font-weight:400;color:#59636e;letter-spacing:0.00px;">2</div>
<div style="position:absolute;left:1777px;top:1052px;width:879px;height:284px;box-sizing:border-box;border:2px solid #d8dde3;border-radius:12px;background:#fff"></div>
<svg style="position:absolute;left:1811px;top:1092px;" width="32" height="32" viewBox="0 0 16 16" preserveAspectRatio="none"><path d="M2 2.5A2.5 2.5 0 0 1 4.5 0h8.75a.75.75 0 0 1 .75.75v12.5a.75.75 0 0 1-.75.75h-2.5a.75.75 0 0 1 0-1.5h1.75v-2h-8a1 1 0 0 0-.714 1.7.75.75 0 1 1-1.072 1.05A2.495 2.495 0 0 1 2 11.5Zm10.5-1h-8a1 1 0 0 0-1 1v6.708A2.486 2.486 0 0 1 4.5 9h8ZM5 12.25a.25.25 0 0 1 .25-.25h3.5a.25.25 0 0 1 .25.25v3.25a.25.25 0 0 1-.4.2l-1.45-1.087a.249.249 0 0 0-.3 0L5.4 15.7a.25.25 0 0 1-.4-.2Z" fill="#59636e"/></svg>
<div class="t" style="left:1858.8px;top:1093.0px;font-size:29px;font-family:'Liberation Sans', sans-serif;font-weight:700;color:#2a66cc;letter-spacing:0.00px;transform:scaleX(0.8991);transform-origin:0 0;">GATE</div>
<div style="position:absolute;left:1947px;top:1089.6px;width:98px;height:38.4px;box-sizing:border-box;border:2px solid #d8dde3;border-radius:20px"></div>
<div class="t" style="left:1961.4px;top:1097.3px;font-size:24px;font-family:'Liberation Sans', sans-serif;font-weight:400;color:#59636e;letter-spacing:0.72px;-webkit-text-stroke:0.3px #59636e;">Public</div>
<div class="t" style="left:1810.4px;top:1149.0px;font-size:26px;font-family:'Liberation Sans', sans-serif;font-weight:400;color:#59636e;letter-spacing:-0.37px;">Smart IoT-based gate monitoring and scheduling system using ESP32,</div>
<div class="t" style="left:1810.4px;top:1185.0px;font-size:26px;font-family:'Liberation Sans', sans-serif;font-weight:400;color:#59636e;letter-spacing:-0.30px;">React, Node.js, and PostgreSQL. Supports real-time control, access</div>
<div class="t" style="left:1810.4px;top:1221.0px;font-size:26px;font-family:'Liberation Sans', sans-serif;font-weight:400;color:#59636e;letter-spacing:-0.13px;">logging, automation, and security alerts.</div>
<div style="position:absolute;left:1811px;top:1272px;width:24px;height:24px;border-radius:50%;background:#f1e05a;box-sizing:border-box;border:1px solid rgba(0,0,0,0.1)"></div>
<div class="t" style="left:1841.0px;top:1271.5px;font-size:26px;font-family:'Liberation Sans', sans-serif;font-weight:400;color:#59636e;letter-spacing:-0.37px;">JavaScript</div>
<div style="position:absolute;left:864px;top:1370px;width:879px;height:300px;box-sizing:border-box;border:2px solid #d8dde3;border-radius:12px;background:#fff"></div>
<svg style="position:absolute;left:898px;top:1409px;" width="32" height="32" viewBox="0 0 16 16" preserveAspectRatio="none"><path d="M2 2.5A2.5 2.5 0 0 1 4.5 0h8.75a.75.75 0 0 1 .75.75v12.5a.75.75 0 0 1-.75.75h-2.5a.75.75 0 0 1 0-1.5h1.75v-2h-8a1 1 0 0 0-.714 1.7.75.75 0 1 1-1.072 1.05A2.495 2.495 0 0 1 2 11.5Zm10.5-1h-8a1 1 0 0 0-1 1v6.708A2.486 2.486 0 0 1 4.5 9h8ZM5 12.25a.25.25 0 0 1 .25-.25h3.5a.25.25 0 0 1 .25.25v3.25a.25.25 0 0 1-.4.2l-1.45-1.087a.249.249 0 0 0-.3 0L5.4 15.7a.25.25 0 0 1-.4-.2Z" fill="#59636e"/></svg>
<div class="t" style="left:945.8px;top:1410.0px;font-size:29px;font-family:'Liberation Sans', sans-serif;font-weight:700;color:#2a66cc;letter-spacing:0.00px;transform:scaleX(0.9372);transform-origin:0 0;">PETANIKU</div>
<div style="position:absolute;left:1101px;top:1406.6px;width:98px;height:38.4px;box-sizing:border-box;border:2px solid #d8dde3;border-radius:20px"></div>
<div class="t" style="left:1115.4px;top:1414.3px;font-size:24px;font-family:'Liberation Sans', sans-serif;font-weight:400;color:#59636e;letter-spacing:0.72px;-webkit-text-stroke:0.3px #59636e;">Public</div>
<div class="t" style="left:897.4px;top:1466.0px;font-size:26px;font-family:'Liberation Sans', sans-serif;font-weight:400;color:#59636e;letter-spacing:-0.15px;">Full-featured online store with cart, checkout, and admin dashboard</div>
<div class="t" style="left:897.4px;top:1502.0px;font-size:26px;font-family:'Liberation Sans', sans-serif;font-weight:400;color:#59636e;letter-spacing:-0.22px;">built with React .</div>
<div style="position:absolute;left:898px;top:1554px;width:24px;height:24px;border-radius:50%;background:#3178c6;box-sizing:border-box;border:1px solid rgba(0,0,0,0.1)"></div>
<div class="t" style="left:928.0px;top:1553.5px;font-size:26px;font-family:'Liberation Sans', sans-serif;font-weight:400;color:#59636e;letter-spacing:-0.20px;">TypeScript</div>
<svg style="position:absolute;left:0;top:0" width="2880" height="1614" viewBox="0 0 2880 1614">
<path d="M0 0 L28 0 C12 12 2 34 0 60 Z" fill="#1f3349"/>
<path d="M2880 0 L2852 0 C2868 12 2878 34 2880 62 Z" fill="#2a3d4e"/>
<path d="M0 1614 L24 1614 C10 1605 2 1592 0 1572 Z" fill="#1f3349"/>
<path d="M2880 1614 L2856 1614 C2870 1600 2878 1580 2880 1546 Z" fill="#1f3349"/>
</svg>
</div>
</body></html>
